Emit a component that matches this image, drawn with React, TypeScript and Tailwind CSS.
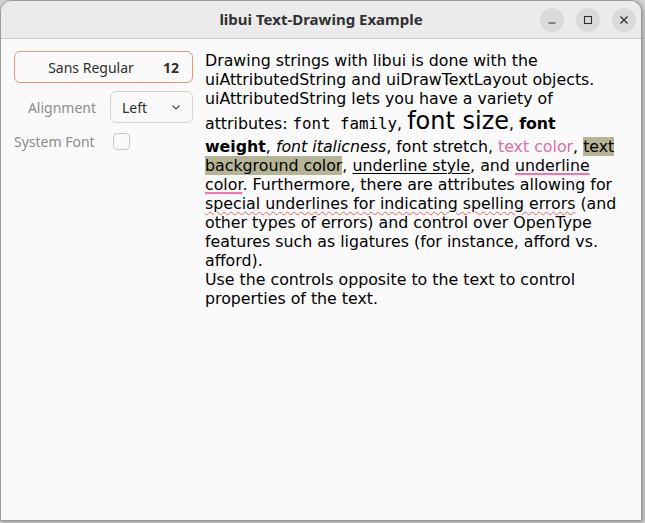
import React from "react";

const TitleButton = ({ children }: { children: React.ReactNode }) => (
  <div className="flex h-6 w-6 items-center justify-center rounded-full bg-[#dadada] text-[#2e2e2e]">
    {children}
  </div>
);

const Sidebar = () => {
  return (
    <div className="flex w-[204px] shrink-0 flex-col pl-[13px] pt-[12px] font-['Noto_Sans','Open_Sans',sans-serif] text-[14px]">
      <div className="flex h-[32px] w-[179px] items-center rounded-[6px] border border-[#e9967a] bg-[#fafafa] pr-[13px] text-[#2e2e2e]">
        <span className="flex-1 pl-[4px] text-center">Sans Regular</span>
        <span className="font-bold">12</span>
      </div>
      <div className="mt-[8px] flex items-center">
        <span className="w-[96px] pr-[14px] text-right text-[#8c8c8c]">Alignment</span>
        <div className="flex h-[32px] w-[83px] items-center justify-between rounded-[6px] border border-[#d4d4d4] pl-[11px] pr-[10px] text-[#2e2e2e]">
          <span>Left</span>
          <svg width="12" height="12" viewBox="0 0 12 12" fill="none" stroke="#444" strokeWidth="1.1">
            <path d="M2.5 4.5 L6 8 L9.5 4.5" />
          </svg>
        </div>
      </div>
      <div className="mt-[8px] flex items-center">
        <span className="w-[99px] text-[#8c8c8c]">System Font</span>
        <div className="h-[17px] w-[17px] rounded-[4px] border border-[#c8c8c8] bg-[#fafafa]" />
      </div>
    </div>
  );
};

const TextArea = () => {
  return (
    <div className="pt-[12px] font-['DejaVu_Sans',sans-serif] text-[15.8px] leading-[19px] text-black">
      Drawing strings with libui is done with the
      <br />
      uiAttributedString and uiDrawTextLayout objects.
      <br />
      uiAttributedString lets you have a variety of
      <br />
      <span className="leading-[27px]">
        attributes: <span className="font-['DejaVu_Sans_Mono',monospace]">font family</span>,{" "}
        <span className="text-[24px]">font size</span>, <span className="font-bold">font</span>
      </span>
      <br />
      <span className="font-bold">weight</span>, <span className="italic">font italicness</span>, font stretch,{" "}
      <span className="text-[#d970a4]">text color</span>, <span className="bg-[#b5b596]">text</span>
      <br />
      <span className="bg-[#b5b596]">background color</span>,{" "}
      <span className="underline decoration-black decoration-1 underline-offset-[2px]">underline style</span>, and{" "}
      <span className="underline decoration-[#ff6fae] decoration-[1.5px] underline-offset-[2px]">underline</span>
      <br />
      <span className="underline decoration-[#ff6fae] decoration-[1.5px] underline-offset-[2px]">color</span>. Furthermore, there are attributes allowing for
      <br />
      <span className="underline decoration-[#f06060] decoration-wavy decoration-1 underline-offset-[2px]">
        special underlines for indicating spelling errors
      </span>{" "}
      (and
      <br />
      other types of errors) and control over OpenType
      <br />
      features such as ligatures (for instance, afford vs.
      <br />
      afford).
      <br />
      Use the controls opposite to the text to control
      <br />
      properties of the text.
    </div>
  );
};

export default function App() {
  return (
    <div className="h-[523px] w-[645px] overflow-hidden bg-[#d4d4d4]">
      <div className="flex h-[521px] w-[642px] flex-col overflow-hidden rounded-t-[12px] border border-[#9a9a9a] bg-[#fafafa] shadow-[1px_1px_4px_rgba(0,0,0,0.35)]">
        <div className="flex h-[38px] shrink-0 items-center border-b border-[#c9c9c9] bg-[#ebebeb]">
          <div className="w-[120px]" />
          <div className="flex-1 text-center font-['Noto_Sans','Open_Sans',sans-serif] text-[15px] font-bold text-[#303030]">
            libui Text-Drawing Example
          </div>
          <div className="flex w-[120px] items-center justify-end gap-[12px] pr-[5px]">
            <TitleButton>
              <svg width="10" height="10" viewBox="0 0 10 10"><path d="M1.5 8 H8.5" stroke="#2e2e2e" strokeWidth="1.2" /></svg>
            </TitleButton>
            <TitleButton>
              <svg width="10" height="10" viewBox="0 0 10 10"><rect x="1.5" y="1.5" width="7" height="7" fill="none" stroke="#2e2e2e" strokeWidth="1.1" /></svg>
            </TitleButton>
            <TitleButton>
              <svg width="10" height="10" viewBox="0 0 10 10"><path d="M1.5 1.5 L8.5 8.5 M8.5 1.5 L1.5 8.5" stroke="#2e2e2e" strokeWidth="1.2" /></svg>
            </TitleButton>
          </div>
        </div>
        <div className="flex flex-1">
          <Sidebar />
          <TextArea />
        </div>
      </div>
    </div>
  );
}
